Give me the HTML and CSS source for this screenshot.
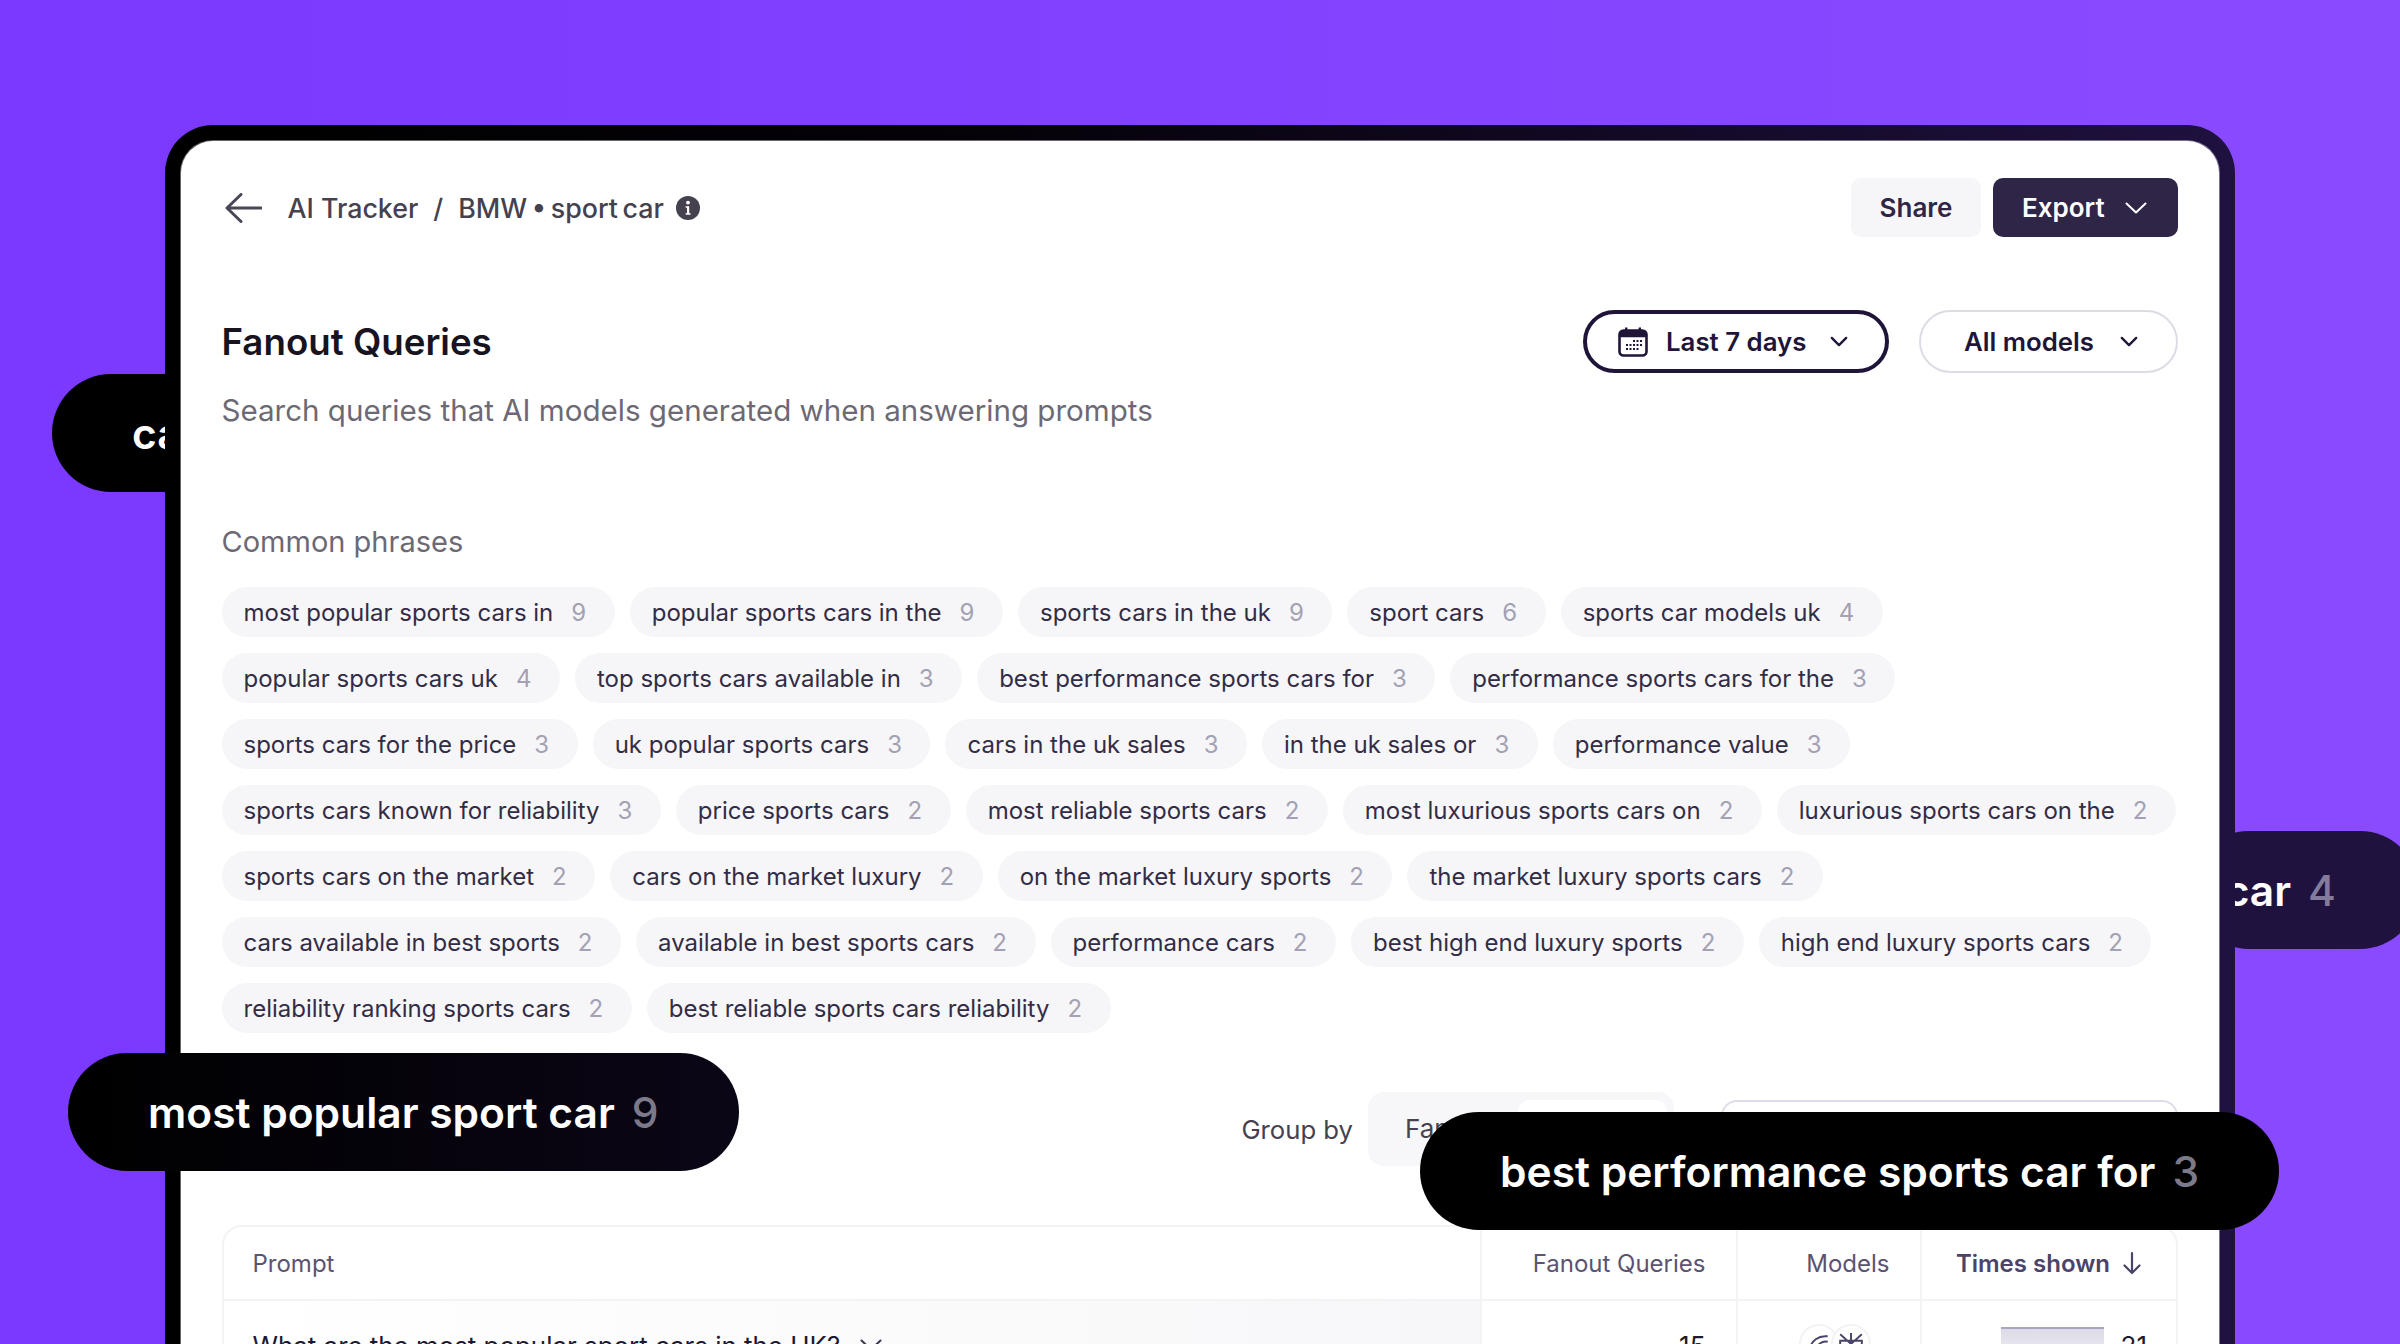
FILE: index.html
```html
<!DOCTYPE html>
<html lang="en">
<head>
<meta charset="utf-8">
<title>Fanout Queries</title>
<link rel="stylesheet" href="styles.css">
</head>
<body>
<div class="float float-back-left"><span>car</span></div>
<div class="float float-back-right"><span>car</span><span class="float-count">4</span></div>

<main class="frame">
  <div class="screen">
    <header class="topbar">
      <div class="crumbs">
        <svg class="back" viewBox="0 0 37 30" fill="none" stroke="#4a4658" stroke-width="3" stroke-linecap="round" stroke-linejoin="round"><path d="M36 15H2M16 1.5 2 15l14 13.5"/></svg>
        <span class="crumb">AI Tracker</span>
        <span class="crumb slash">/</span>
        <span class="crumb crumb-tight">BMW • sport car</span>
        <svg class="info" viewBox="0 0 24 24"><circle cx="12" cy="12" r="12" fill="#45414f"/><circle cx="12" cy="6.6" r="1.9" fill="#fff"/><path d="M9.6 10.2h3.6v7h1.4v1.6H9.6v-1.6h1.4v-5.4H9.6z" fill="#fff"/></svg>
      </div>
      <div class="actions">
        <button class="btn btn-light">Share</button>
        <button class="btn btn-dark">Export
          <svg class="chev-lg" viewBox="0 0 22 12" fill="none" stroke="#fff" stroke-width="2" stroke-linecap="round" stroke-linejoin="round"><path d="M1.5 1.5 11 10.5l9.5-9"/></svg>
        </button>
      </div>
    </header>

    <section class="title-row">
      <h1 class="title">Fanout Queries</h1>
      <div class="filters">
        <button class="filter filter-active">
          <svg class="cal" viewBox="0 0 30 30"><path d="M7 0.5h2.4v3.5H7zM20.6 0.5H23v3.5h-2.4z" fill="#1f1538"/><rect x="1.5" y="3.5" width="27" height="25" rx="4" fill="#fff" stroke="#1f1538" stroke-width="2.6"/><path d="M2 5.5a3 3 0 0 1 3-2.2h20a3 3 0 0 1 3 2.2v4.8H2z" fill="#1f1538"/><g fill="#1f1538"><rect x="15" y="13" width="2" height="2"/><rect x="18.5" y="13" width="2" height="2"/><rect x="22" y="13" width="2" height="2"/><rect x="8" y="17" width="2" height="2"/><rect x="11.5" y="17" width="2" height="2"/><rect x="15" y="17" width="2" height="2"/><rect x="18.5" y="17" width="2" height="2"/><rect x="22" y="17" width="2" height="2"/><rect x="8" y="21" width="2" height="2"/><rect x="11.5" y="21" width="2" height="2"/><rect x="15" y="21" width="2" height="2"/><rect x="18.5" y="21" width="2" height="2"/></g></svg>
          Last 7 days
          <svg class="chev" viewBox="0 0 20 12" fill="none" stroke="#1f1538" stroke-width="2.6" stroke-linecap="round" stroke-linejoin="round"><path d="M2 2l8 8 8-8"/></svg>
        </button>
        <button class="filter filter-plain">All models
          <svg class="chev" viewBox="0 0 20 12" fill="none" stroke="#1f1538" stroke-width="2.6" stroke-linecap="round" stroke-linejoin="round"><path d="M2 2l8 8 8-8"/></svg>
        </button>
      </div>
    </section>
    <p class="subtitle">Search queries that AI models generated when answering prompts</p>

    <h2 class="phrases-title">Common phrases</h2>
    <div class="phrases">
      <span class="phrase">most popular sports cars in<b>9</b></span>
      <span class="phrase">popular sports cars in the<b>9</b></span>
      <span class="phrase">sports cars in the uk<b>9</b></span>
      <span class="phrase">sport cars<b>6</b></span>
      <span class="phrase">sports car models uk<b>4</b></span>
      <span class="phrase">popular sports cars uk<b>4</b></span>
      <span class="phrase">top sports cars available in<b>3</b></span>
      <span class="phrase">best performance sports cars for<b>3</b></span>
      <span class="phrase">performance sports cars for the<b>3</b></span>
      <span class="phrase">sports cars for the price<b>3</b></span>
      <span class="phrase">uk popular sports cars<b>3</b></span>
      <span class="phrase">cars in the uk sales<b>3</b></span>
      <span class="phrase">in the uk sales or<b>3</b></span>
      <span class="phrase">performance value<b>3</b></span>
      <span class="phrase">sports cars known for reliability<b>3</b></span>
      <span class="phrase">price sports cars<b>2</b></span>
      <span class="phrase">most reliable sports cars<b>2</b></span>
      <span class="phrase">most luxurious sports cars on<b>2</b></span>
      <span class="phrase">luxurious sports cars on the<b>2</b></span>
      <span class="phrase">sports cars on the market<b>2</b></span>
      <span class="phrase">cars on the market luxury<b>2</b></span>
      <span class="phrase">on the market luxury sports<b>2</b></span>
      <span class="phrase">the market luxury sports cars<b>2</b></span>
      <span class="phrase">cars available in best sports<b>2</b></span>
      <span class="phrase">available in best sports cars<b>2</b></span>
      <span class="phrase">performance cars<b>2</b></span>
      <span class="phrase">best high end luxury sports<b>2</b></span>
      <span class="phrase">high end luxury sports cars<b>2</b></span>
      <span class="phrase">reliability ranking sports cars<b>2</b></span>
      <span class="phrase">best reliable sports cars reliability<b>2</b></span>
    </div>

    <div class="toolbar">
      <span class="group-label">Group by</span>
      <div class="segment">
        <span class="seg-item">Fanout</span>
        <span class="seg-item seg-active">Prompt</span>
      </div>
      <div class="search"></div>
    </div>

    <div class="table">
      <div class="cell cell-prompt head">Prompt</div>
      <div class="cell cell-num head">Fanout Queries</div>
      <div class="cell cell-num head">Models</div>
      <div class="cell cell-num head head-sort">Times shown
        <svg class="sort" viewBox="0 0 20 24" fill="none" stroke="#4c4468" stroke-width="2.2" stroke-linecap="round" stroke-linejoin="round"><path d="M10 2v20M2.5 14.5 10 22l7.5-7.5"/></svg>
      </div>
      <div class="cell cell-prompt row-prompt">What are the most popular sport cars in the UK?
        <svg class="row-chev" viewBox="0 0 22 12" fill="none" stroke="#3a3550" stroke-width="2" stroke-linecap="round" stroke-linejoin="round"><path d="M1.5 1.5 11 10.5l9.5-9"/></svg>
      </div>
      <div class="cell cell-num row-val">15</div>
      <div class="cell cell-num row-models">
        <span class="model">
          <svg viewBox="0 0 24 24" fill="none" stroke="#4c4468" stroke-width="1.8"><path d="M20 4C12 3 4 8 4 16c0 3 1 5 3 6M20 9c-5-1-10 2-10 8 0 2 .6 4 2 5M20 14c-2 0-5 1-5 4"/></svg>
        </span>
        <span class="model model-over">
          <svg viewBox="0 0 24 24" fill="none" stroke="#4c4468" stroke-width="1.8"><path d="M12 1v22M2 2l10 9 10-9M2 22l10-9 10 9M2 8h20v9H2z"/></svg>
        </span>
      </div>
      <div class="cell cell-num row-times"><span class="bar"></span><span class="times-val">21</span></div>
    </div>
  </div>
</main>

<div class="float float-popular"><span>most popular sport car</span><span class="float-count">9</span></div>
<div class="float float-best"><span>best performance sports car for</span><span class="float-count">3</span></div>
</body>
</html>
```

FILE: styles.css
```css
* { box-sizing: border-box; }
html, body { margin: 0; height: 100%; }
body {
  position: relative;
  width: 2400px;
  height: 1344px;
  overflow: hidden;
  padding-top: 125px;
  background: linear-gradient(90deg, #7b38ff 0%, #8a4bff 100%);
  font-family: Inter, "Liberation Sans", sans-serif;
  color: #1f1538;
}
button { font: inherit; border: 0; cursor: pointer; }

.frame {
  position: relative;
  z-index: 1;
  width: 2070px;
  height: 1219px;
  margin-left: 165px;
  padding: 16px 16px 0;
  border-radius: 48px 48px 0 0;
  background: linear-gradient(90deg, #000 0%, #050208 40%, #1f1140 100%);
}
.screen {
  height: 100%;
  padding: 37px 41px 0 40.5px;
  border-radius: 32px 32px 0 0;
  background: #fff;
  box-shadow: 0 0 0 1px rgba(255, 255, 255, .4);
  overflow: hidden;
}

.topbar { display: flex; justify-content: space-between; align-items: center; height: 59px; }
.crumbs { display: flex; align-items: center; }
.back { width: 37px; height: 30px; margin: 0 26px 0 3px; }
.crumb { font-size: 26.8px; font-weight: 500; color: #45414f; }
.crumb-tight { word-spacing: -2.5px; }
.slash { margin: 0 15px; }
.info { width: 24px; height: 24px; margin-left: 12px; }
.actions { display: flex; gap: 12px; }
.btn { height: 59px; border-radius: 10px; font-size: 26px; font-weight: 600; }
.btn-light { width: 130px; background: #f6f6f9; color: #2f2547; }
.btn-dark { display: flex; align-items: center; gap: 20px; width: 185px; padding: 0 0 0 29px; background: #2f2547; color: #fff; }
.chev-lg { width: 22px; height: 12px; }

.title-row { display: flex; justify-content: space-between; align-items: center; height: 63px; margin-top: 73px; }
.title { margin: 0; font-size: 36.7px; font-weight: 600; color: #17141f; }
.filters { display: flex; gap: 30px; }
.filter { display: flex; align-items: center; height: 63px; border-radius: 32px; background: #fff; font-size: 25.8px; font-weight: 600; color: #1f1538; }
.filter-active { width: 306px; padding: 0 37px 0 31px; gap: 18px; border: 4px solid #1f1538; }
.filter-plain { width: 259px; padding: 0 38px 0 43px; justify-content: space-between; border: 2px solid #dddce6; }
.cal { width: 30px; height: 30px; flex: none; }
.chev { width: 18px; height: 11px; margin-left: auto; flex: none; }

.subtitle { margin: 17px 0 0; font-size: 29.55px; line-height: 40px; color: #6c6975; }
.phrases-title { margin: 92px 0 0; font-size: 29px; line-height: 40px; font-weight: 400; color: #6c6975; }

.phrases { display: flex; flex-wrap: wrap; gap: 16px 15px; margin-top: 25px; }
.phrase {
  display: inline-flex;
  align-items: center;
  height: 50px;
  padding: 0 28.5px 0 22px;
  border-radius: 25px;
  background: #f6f6f8;
  font-size: 24px;
  color: #332c45;
}
.phrase b { margin-left: 18px; font-weight: 400; color: #a3a1b3; }

.toolbar { display: flex; align-items: flex-start; margin-top: 59px; height: 74px; }
.group-label { margin: 20px 15px 0 auto; font-size: 25.7px; line-height: 36px; color: #45414f; }
.segment { display: flex; width: 306px; height: 74px; padding: 8px 7px 8px 37px; border-radius: 16px; background: #f7f7f9; font-size: 26px; color: #45414f; }
.seg-item { line-height: 58px; }
.seg-active { width: 149px; margin-left: auto; border-radius: 12px; background: #fff; text-align: center; }
.search { width: 457px; height: 74px; margin: 8px 0 0 47px; border: 2px solid #dddce8; border-radius: 16px; }

.table {
  display: grid;
  grid-template-columns: 1256px 256px 184px 1fr;
  grid-template-rows: 74px 120px;
  margin-top: 59px;
  border: 2px solid #f3f3f6;
  border-radius: 20px;
  overflow: hidden;
}
.cell { border-left: 2px solid #f3f3f6; border-bottom: 2px solid #f3f3f6; font-size: 24px; }
.cell-prompt { border-left: 0; padding-left: 29px; }
.cell-num { display: flex; justify-content: flex-end; padding-right: 30px; }
.head { display: flex; align-items: center; color: #5b5370; }
.head.cell-num { justify-content: flex-end; }
.head-sort { gap: 12px; padding-right: 34px; font-weight: 600; color: #4c4468; }
.sort { width: 20px; height: 24px; }
.row-prompt { display: flex; align-items: flex-start; gap: 20px; padding-top: 30px; font-size: 25.9px; line-height: 30px; color: #1f1a33; background: linear-gradient(90deg, #fff 0%, #f7f7f9 100%); }
.row-chev { width: 22px; height: 12px; margin-top: 8px; }
.row-val { padding-top: 30px; font-size: 26px; line-height: 30px; color: #1f1a33; }
.row-models { align-items: flex-start; padding: 23px 49px 0 0; }
.model { display: flex; align-items: flex-start; justify-content: center; width: 40px; height: 40px; padding-top: 6px; border: 2px solid #f3f3f6; border-radius: 50%; background: #fff; }
.model svg { width: 26px; height: 26px; flex: none; }
.model-over { margin-left: -8px; }
.row-times { gap: 17px; padding: 26px 29px 0 0; font-size: 26px; line-height: 30px; color: #1f1a33; }
.times-val { margin-top: 4px; }
.bar { display: block; width: 103px; height: 50px; border-top: 2px solid #a9a6c4; background: linear-gradient(180deg, #dcdbe7, #f9f9fb); }

.float {
  position: absolute;
  display: flex;
  align-items: center;
  height: 118px;
  border-radius: 59px;
  font-size: 42.5px;
  font-weight: 600;
  color: #fff;
  white-space: nowrap;
}
.float-count { margin-left: 17px; font-weight: 500; color: #7c7a8a; }
.float-back-left { z-index: 0; left: 52px; top: 374px; width: 200px; padding-left: 80px; background: #000; }
.float-back-right { z-index: 0; left: 2190px; top: 831px; width: 229px; justify-content: flex-end; padding-right: 83px; background: #20123f; }
.float-back-right .float-count { color: #837b9c; }
.float-popular { z-index: 2; left: 68px; top: 1053px; width: 671px; padding-left: 80px; background: linear-gradient(90deg, #000, #0b0616); }
.float-best { z-index: 2; left: 1420px; top: 1112px; width: 859px; padding-left: 80px; background: #000; }
```
